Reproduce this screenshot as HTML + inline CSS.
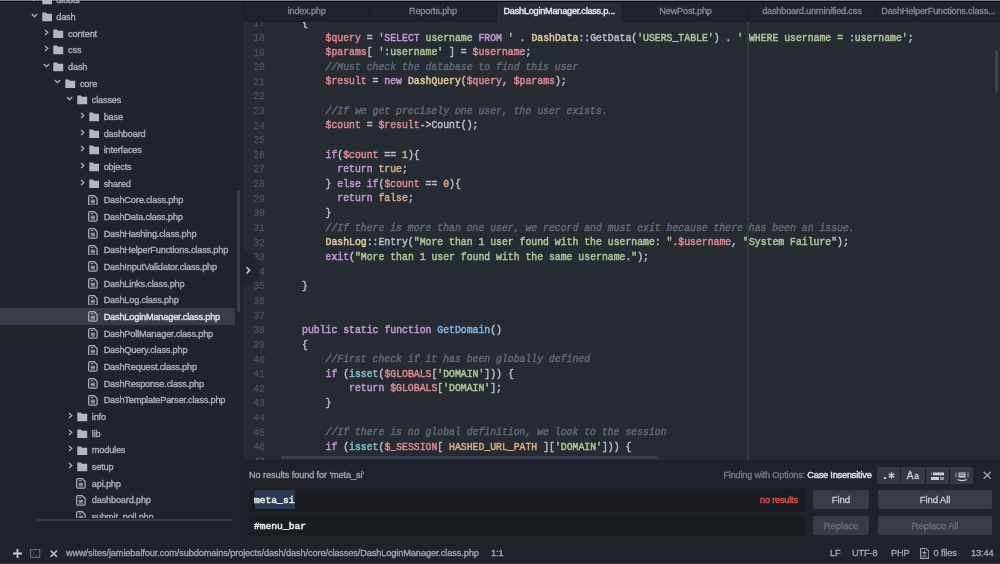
<!DOCTYPE html>
<html><head><meta charset="utf-8"><style>
*{margin:0;padding:0;box-sizing:border-box}
html,body{width:1000px;height:564px;overflow:hidden;background:#21252b;font-family:"Liberation Sans",sans-serif;}
.abs{position:absolute}
#topA{position:absolute;left:0;top:0;width:1000px;height:1px;background:#7a7d86}
#topB{position:absolute;left:0;top:1px;width:1000px;height:1px;background:#05060b}
#topC{position:absolute;left:0;top:2px;width:1000px;height:1px;background:#292c34}
#tree{position:absolute;left:0;top:0px;width:243px;height:542px;clip-path:inset(0);will-change:transform}
.row{position:absolute;left:0;width:235px;height:16.67px;font-size:9.2px;letter-spacing:-0.18px;color:#a8aeb9;white-space:nowrap}
.row.sel{background:#3b3e4a;color:#e0e3e8}
.row .t{position:absolute;top:0.6px;line-height:16.67px;-webkit-text-stroke:0.38px currentColor}
.chev{position:absolute}
#tabs{position:absolute;left:243px;top:2px;width:757px;height:19.5px;background:#21252b}
.tab{position:absolute;top:0;height:19.5px;width:126px;text-align:center;font-size:9.2px;letter-spacing:-0.2px;-webkit-text-stroke:0.3px currentColor;line-height:19px;border-left:1px solid #1d1f24;box-shadow:inset 0 -6px 0 #202227;color:#878d98;white-space:nowrap}
.tab.act{background:#282c34;color:#e2e5ea;box-shadow:none;-webkit-text-stroke:0.45px #e2e5ea;letter-spacing:-0.26px}
#editorbg{position:absolute;left:243px;top:21.5px;width:757px;height:438.5px;background:#282c34}
#editor{position:absolute;left:243px;top:21.5px;width:757px;height:438.5px;clip-path:inset(0);will-change:transform}
.ln{position:absolute;transform:scaleY(1.1);transform-origin:50% 62%;-webkit-text-stroke:0.25px currentColor;left:0;width:22px;text-align:right;font-family:"Liberation Mono",monospace;font-size:9.81px;color:#4b5263}
.cl{position:absolute;white-space:pre;transform:scaleY(1.1);transform-origin:50% 62%;-webkit-text-stroke:0.45px currentColor;font-family:"Liberation Mono",monospace;font-size:9.81px;color:#b9bfca}
.r{color:#dc8a92} .g{color:#aac898} .p{color:#c49ad6} .y{color:#e2cc9c} .o{color:#d6ae8a} .b{color:#80b6e6} .c{color:#80bec6} .cm{color:#636a76;font-style:italic}
#find{position:absolute;left:243px;top:460px;width:757px;height:82px;background:#21252b;will-change:transform}
#status{position:absolute;left:0;top:542px;width:1000px;height:20px;background:#21252b;font-size:9.2px;letter-spacing:-0.1px;-webkit-text-stroke:0.3px currentColor;color:#a3a9b4}
#botline{position:absolute;left:0;top:562px;width:1000px;height:1px;background:#1d1c23}
#botline2{position:absolute;left:0;top:563px;width:1000px;height:1px;background:#403f4a}
#botband{position:absolute;left:0;top:560.5px;width:1000px;height:1.5px;background:#262630}
.inp{position:absolute;background:#1c1e24;border-radius:2px}
.btn{position:absolute;background:#383d48;border-radius:2px;font-size:9.8px;color:#c5cad3;text-align:center}
</style></head><body><div id="root" style="position:absolute;left:0;top:0;width:1000px;height:564px;opacity:0.999">
<div id="topA"></div><div id="topB"></div><div id="topC"></div>
<div id="tree"><div class="row" style="top:-8.41px"><svg class="abs" style="left:32.15px;top:3.735000000000001px" width="5" height="7" viewBox="0 0 5 7"><path d="M1.1 0.9L3.7 3.5L1.1 6.1" fill="none" stroke="#a3aab6" stroke-width="1.45"/></svg><svg class="abs" style="left:41.55px;top:3.835000000000001px" width="10.5" height="9.6" viewBox="0 0 10.5 9.6"><path d="M0.3 0.4h3.6l1 1.3h5.3v7.6h-9.9z" fill="#b3b9c3"/></svg><span class="t" style="left:56.25px">dlobal</span></div><div class="row" style="top:8.27px"><svg class="abs" style="left:30.65px;top:4.4350000000000005px" width="7" height="5" viewBox="0 0 7 5"><path d="M0.9 1.1L3.5 3.7L6.1 1.1" fill="none" stroke="#a3aab6" stroke-width="1.45"/></svg><svg class="abs" style="left:41.55px;top:3.835000000000001px" width="10.5" height="9.6" viewBox="0 0 10.5 9.6"><path d="M0.3 0.4h3.6l1 1.3h5.3v7.6h-9.9z" fill="#b3b9c3"/></svg><span class="t" style="left:56.25px">dash</span></div><div class="row" style="top:24.94px"><svg class="abs" style="left:43.99999999999999px;top:3.735000000000001px" width="5" height="7" viewBox="0 0 5 7"><path d="M1.1 0.9L3.7 3.5L1.1 6.1" fill="none" stroke="#a3aab6" stroke-width="1.45"/></svg><svg class="abs" style="left:53.39999999999999px;top:3.835000000000001px" width="10.5" height="9.6" viewBox="0 0 10.5 9.6"><path d="M0.3 0.4h3.6l1 1.3h5.3v7.6h-9.9z" fill="#b3b9c3"/></svg><span class="t" style="left:68.1px">content</span></div><div class="row" style="top:41.61px"><svg class="abs" style="left:43.99999999999999px;top:3.735000000000001px" width="5" height="7" viewBox="0 0 5 7"><path d="M1.1 0.9L3.7 3.5L1.1 6.1" fill="none" stroke="#a3aab6" stroke-width="1.45"/></svg><svg class="abs" style="left:53.39999999999999px;top:3.835000000000001px" width="10.5" height="9.6" viewBox="0 0 10.5 9.6"><path d="M0.3 0.4h3.6l1 1.3h5.3v7.6h-9.9z" fill="#b3b9c3"/></svg><span class="t" style="left:68.1px">css</span></div><div class="row" style="top:58.28px"><svg class="abs" style="left:42.49999999999999px;top:4.4350000000000005px" width="7" height="5" viewBox="0 0 7 5"><path d="M0.9 1.1L3.5 3.7L6.1 1.1" fill="none" stroke="#a3aab6" stroke-width="1.45"/></svg><svg class="abs" style="left:53.39999999999999px;top:3.835000000000001px" width="10.5" height="9.6" viewBox="0 0 10.5 9.6"><path d="M0.3 0.4h3.6l1 1.3h5.3v7.6h-9.9z" fill="#b3b9c3"/></svg><span class="t" style="left:68.1px">dash</span></div><div class="row" style="top:74.95px"><svg class="abs" style="left:54.35px;top:4.4350000000000005px" width="7" height="5" viewBox="0 0 7 5"><path d="M0.9 1.1L3.5 3.7L6.1 1.1" fill="none" stroke="#a3aab6" stroke-width="1.45"/></svg><svg class="abs" style="left:65.25px;top:3.835000000000001px" width="10.5" height="9.6" viewBox="0 0 10.5 9.6"><path d="M0.3 0.4h3.6l1 1.3h5.3v7.6h-9.9z" fill="#b3b9c3"/></svg><span class="t" style="left:79.95px">core</span></div><div class="row" style="top:91.62px"><svg class="abs" style="left:66.19999999999999px;top:4.4350000000000005px" width="7" height="5" viewBox="0 0 7 5"><path d="M0.9 1.1L3.5 3.7L6.1 1.1" fill="none" stroke="#a3aab6" stroke-width="1.45"/></svg><svg class="abs" style="left:77.1px;top:3.835000000000001px" width="10.5" height="9.6" viewBox="0 0 10.5 9.6"><path d="M0.3 0.4h3.6l1 1.3h5.3v7.6h-9.9z" fill="#b3b9c3"/></svg><span class="t" style="left:91.8px">classes</span></div><div class="row" style="top:108.29px"><svg class="abs" style="left:79.55000000000001px;top:3.735000000000001px" width="5" height="7" viewBox="0 0 5 7"><path d="M1.1 0.9L3.7 3.5L1.1 6.1" fill="none" stroke="#a3aab6" stroke-width="1.45"/></svg><svg class="abs" style="left:88.95px;top:3.835000000000001px" width="10.5" height="9.6" viewBox="0 0 10.5 9.6"><path d="M0.3 0.4h3.6l1 1.3h5.3v7.6h-9.9z" fill="#b3b9c3"/></svg><span class="t" style="left:103.65px">base</span></div><div class="row" style="top:124.96px"><svg class="abs" style="left:79.55000000000001px;top:3.735000000000001px" width="5" height="7" viewBox="0 0 5 7"><path d="M1.1 0.9L3.7 3.5L1.1 6.1" fill="none" stroke="#a3aab6" stroke-width="1.45"/></svg><svg class="abs" style="left:88.95px;top:3.835000000000001px" width="10.5" height="9.6" viewBox="0 0 10.5 9.6"><path d="M0.3 0.4h3.6l1 1.3h5.3v7.6h-9.9z" fill="#b3b9c3"/></svg><span class="t" style="left:103.65px">dashboard</span></div><div class="row" style="top:141.63px"><svg class="abs" style="left:79.55000000000001px;top:3.735000000000001px" width="5" height="7" viewBox="0 0 5 7"><path d="M1.1 0.9L3.7 3.5L1.1 6.1" fill="none" stroke="#a3aab6" stroke-width="1.45"/></svg><svg class="abs" style="left:88.95px;top:3.835000000000001px" width="10.5" height="9.6" viewBox="0 0 10.5 9.6"><path d="M0.3 0.4h3.6l1 1.3h5.3v7.6h-9.9z" fill="#b3b9c3"/></svg><span class="t" style="left:103.65px">interfaces</span></div><div class="row" style="top:158.30px"><svg class="abs" style="left:79.55000000000001px;top:3.735000000000001px" width="5" height="7" viewBox="0 0 5 7"><path d="M1.1 0.9L3.7 3.5L1.1 6.1" fill="none" stroke="#a3aab6" stroke-width="1.45"/></svg><svg class="abs" style="left:88.95px;top:3.835000000000001px" width="10.5" height="9.6" viewBox="0 0 10.5 9.6"><path d="M0.3 0.4h3.6l1 1.3h5.3v7.6h-9.9z" fill="#b3b9c3"/></svg><span class="t" style="left:103.65px">objects</span></div><div class="row" style="top:174.97px"><svg class="abs" style="left:79.55000000000001px;top:3.735000000000001px" width="5" height="7" viewBox="0 0 5 7"><path d="M1.1 0.9L3.7 3.5L1.1 6.1" fill="none" stroke="#a3aab6" stroke-width="1.45"/></svg><svg class="abs" style="left:88.95px;top:3.835000000000001px" width="10.5" height="9.6" viewBox="0 0 10.5 9.6"><path d="M0.3 0.4h3.6l1 1.3h5.3v7.6h-9.9z" fill="#b3b9c3"/></svg><span class="t" style="left:103.65px">shared</span></div><div class="row" style="top:191.64px"><svg class="abs" style="left:88.25px;top:3.035000000000001px" width="9.8" height="10.8" viewBox="0 0 9.8 10.8"><path d="M1.9 0.7h4.4l2.8 2.8v5.4q0 1.2-1.2 1.2h-6q-1.2 0-1.2-1.2v-7q0-1.2 1.2-1.2z" fill="none" stroke="#aab0ba" stroke-width="1.25"/><path d="M2.8 2.6h2.6M2.8 5.2h4.2M2.8 6.6h4.2M2.8 8h4.2" stroke="#aab0ba" stroke-width="1"/></svg><span class="t" style="left:103.65px">DashCore.class.php</span></div><div class="row" style="top:208.31px"><svg class="abs" style="left:88.25px;top:3.035000000000001px" width="9.8" height="10.8" viewBox="0 0 9.8 10.8"><path d="M1.9 0.7h4.4l2.8 2.8v5.4q0 1.2-1.2 1.2h-6q-1.2 0-1.2-1.2v-7q0-1.2 1.2-1.2z" fill="none" stroke="#aab0ba" stroke-width="1.25"/><path d="M2.8 2.6h2.6M2.8 5.2h4.2M2.8 6.6h4.2M2.8 8h4.2" stroke="#aab0ba" stroke-width="1"/></svg><span class="t" style="left:103.65px">DashData.class.php</span></div><div class="row" style="top:224.98px"><svg class="abs" style="left:88.25px;top:3.035000000000001px" width="9.8" height="10.8" viewBox="0 0 9.8 10.8"><path d="M1.9 0.7h4.4l2.8 2.8v5.4q0 1.2-1.2 1.2h-6q-1.2 0-1.2-1.2v-7q0-1.2 1.2-1.2z" fill="none" stroke="#aab0ba" stroke-width="1.25"/><path d="M2.8 2.6h2.6M2.8 5.2h4.2M2.8 6.6h4.2M2.8 8h4.2" stroke="#aab0ba" stroke-width="1"/></svg><span class="t" style="left:103.65px">DashHashing.class.php</span></div><div class="row" style="top:241.65px"><svg class="abs" style="left:88.25px;top:3.035000000000001px" width="9.8" height="10.8" viewBox="0 0 9.8 10.8"><path d="M1.9 0.7h4.4l2.8 2.8v5.4q0 1.2-1.2 1.2h-6q-1.2 0-1.2-1.2v-7q0-1.2 1.2-1.2z" fill="none" stroke="#aab0ba" stroke-width="1.25"/><path d="M2.8 2.6h2.6M2.8 5.2h4.2M2.8 6.6h4.2M2.8 8h4.2" stroke="#aab0ba" stroke-width="1"/></svg><span class="t" style="left:103.65px">DashHelperFunctions.class.php</span></div><div class="row" style="top:258.32px"><svg class="abs" style="left:88.25px;top:3.035000000000001px" width="9.8" height="10.8" viewBox="0 0 9.8 10.8"><path d="M1.9 0.7h4.4l2.8 2.8v5.4q0 1.2-1.2 1.2h-6q-1.2 0-1.2-1.2v-7q0-1.2 1.2-1.2z" fill="none" stroke="#aab0ba" stroke-width="1.25"/><path d="M2.8 2.6h2.6M2.8 5.2h4.2M2.8 6.6h4.2M2.8 8h4.2" stroke="#aab0ba" stroke-width="1"/></svg><span class="t" style="left:103.65px">DashInputValidator.class.php</span></div><div class="row" style="top:274.99px"><svg class="abs" style="left:88.25px;top:3.035000000000001px" width="9.8" height="10.8" viewBox="0 0 9.8 10.8"><path d="M1.9 0.7h4.4l2.8 2.8v5.4q0 1.2-1.2 1.2h-6q-1.2 0-1.2-1.2v-7q0-1.2 1.2-1.2z" fill="none" stroke="#aab0ba" stroke-width="1.25"/><path d="M2.8 2.6h2.6M2.8 5.2h4.2M2.8 6.6h4.2M2.8 8h4.2" stroke="#aab0ba" stroke-width="1"/></svg><span class="t" style="left:103.65px">DashLinks.class.php</span></div><div class="row" style="top:291.66px"><svg class="abs" style="left:88.25px;top:3.035000000000001px" width="9.8" height="10.8" viewBox="0 0 9.8 10.8"><path d="M1.9 0.7h4.4l2.8 2.8v5.4q0 1.2-1.2 1.2h-6q-1.2 0-1.2-1.2v-7q0-1.2 1.2-1.2z" fill="none" stroke="#aab0ba" stroke-width="1.25"/><path d="M2.8 2.6h2.6M2.8 5.2h4.2M2.8 6.6h4.2M2.8 8h4.2" stroke="#aab0ba" stroke-width="1"/></svg><span class="t" style="left:103.65px">DashLog.class.php</span></div><div class="row sel" style="top:308.33px"><svg class="abs" style="left:88.25px;top:3.035000000000001px" width="9.8" height="10.8" viewBox="0 0 9.8 10.8"><path d="M1.9 0.7h4.4l2.8 2.8v5.4q0 1.2-1.2 1.2h-6q-1.2 0-1.2-1.2v-7q0-1.2 1.2-1.2z" fill="none" stroke="#aab0ba" stroke-width="1.25"/><path d="M2.8 2.6h2.6M2.8 5.2h4.2M2.8 6.6h4.2M2.8 8h4.2" stroke="#aab0ba" stroke-width="1"/></svg><span class="t" style="left:103.65px">DashLoginManager.class.php</span></div><div class="row" style="top:325.00px"><svg class="abs" style="left:88.25px;top:3.035000000000001px" width="9.8" height="10.8" viewBox="0 0 9.8 10.8"><path d="M1.9 0.7h4.4l2.8 2.8v5.4q0 1.2-1.2 1.2h-6q-1.2 0-1.2-1.2v-7q0-1.2 1.2-1.2z" fill="none" stroke="#aab0ba" stroke-width="1.25"/><path d="M2.8 2.6h2.6M2.8 5.2h4.2M2.8 6.6h4.2M2.8 8h4.2" stroke="#aab0ba" stroke-width="1"/></svg><span class="t" style="left:103.65px">DashPollManager.class.php</span></div><div class="row" style="top:341.67px"><svg class="abs" style="left:88.25px;top:3.035000000000001px" width="9.8" height="10.8" viewBox="0 0 9.8 10.8"><path d="M1.9 0.7h4.4l2.8 2.8v5.4q0 1.2-1.2 1.2h-6q-1.2 0-1.2-1.2v-7q0-1.2 1.2-1.2z" fill="none" stroke="#aab0ba" stroke-width="1.25"/><path d="M2.8 2.6h2.6M2.8 5.2h4.2M2.8 6.6h4.2M2.8 8h4.2" stroke="#aab0ba" stroke-width="1"/></svg><span class="t" style="left:103.65px">DashQuery.class.php</span></div><div class="row" style="top:358.34px"><svg class="abs" style="left:88.25px;top:3.035000000000001px" width="9.8" height="10.8" viewBox="0 0 9.8 10.8"><path d="M1.9 0.7h4.4l2.8 2.8v5.4q0 1.2-1.2 1.2h-6q-1.2 0-1.2-1.2v-7q0-1.2 1.2-1.2z" fill="none" stroke="#aab0ba" stroke-width="1.25"/><path d="M2.8 2.6h2.6M2.8 5.2h4.2M2.8 6.6h4.2M2.8 8h4.2" stroke="#aab0ba" stroke-width="1"/></svg><span class="t" style="left:103.65px">DashRequest.class.php</span></div><div class="row" style="top:375.01px"><svg class="abs" style="left:88.25px;top:3.035000000000001px" width="9.8" height="10.8" viewBox="0 0 9.8 10.8"><path d="M1.9 0.7h4.4l2.8 2.8v5.4q0 1.2-1.2 1.2h-6q-1.2 0-1.2-1.2v-7q0-1.2 1.2-1.2z" fill="none" stroke="#aab0ba" stroke-width="1.25"/><path d="M2.8 2.6h2.6M2.8 5.2h4.2M2.8 6.6h4.2M2.8 8h4.2" stroke="#aab0ba" stroke-width="1"/></svg><span class="t" style="left:103.65px">DashResponse.class.php</span></div><div class="row" style="top:391.68px"><svg class="abs" style="left:88.25px;top:3.035000000000001px" width="9.8" height="10.8" viewBox="0 0 9.8 10.8"><path d="M1.9 0.7h4.4l2.8 2.8v5.4q0 1.2-1.2 1.2h-6q-1.2 0-1.2-1.2v-7q0-1.2 1.2-1.2z" fill="none" stroke="#aab0ba" stroke-width="1.25"/><path d="M2.8 2.6h2.6M2.8 5.2h4.2M2.8 6.6h4.2M2.8 8h4.2" stroke="#aab0ba" stroke-width="1"/></svg><span class="t" style="left:103.65px">DashTemplateParser.class.php</span></div><div class="row" style="top:408.35px"><svg class="abs" style="left:67.69999999999999px;top:3.735000000000001px" width="5" height="7" viewBox="0 0 5 7"><path d="M1.1 0.9L3.7 3.5L1.1 6.1" fill="none" stroke="#a3aab6" stroke-width="1.45"/></svg><svg class="abs" style="left:77.1px;top:3.835000000000001px" width="10.5" height="9.6" viewBox="0 0 10.5 9.6"><path d="M0.3 0.4h3.6l1 1.3h5.3v7.6h-9.9z" fill="#b3b9c3"/></svg><span class="t" style="left:91.8px">info</span></div><div class="row" style="top:425.02px"><svg class="abs" style="left:67.69999999999999px;top:3.735000000000001px" width="5" height="7" viewBox="0 0 5 7"><path d="M1.1 0.9L3.7 3.5L1.1 6.1" fill="none" stroke="#a3aab6" stroke-width="1.45"/></svg><svg class="abs" style="left:77.1px;top:3.835000000000001px" width="10.5" height="9.6" viewBox="0 0 10.5 9.6"><path d="M0.3 0.4h3.6l1 1.3h5.3v7.6h-9.9z" fill="#b3b9c3"/></svg><span class="t" style="left:91.8px">lib</span></div><div class="row" style="top:441.69px"><svg class="abs" style="left:67.69999999999999px;top:3.735000000000001px" width="5" height="7" viewBox="0 0 5 7"><path d="M1.1 0.9L3.7 3.5L1.1 6.1" fill="none" stroke="#a3aab6" stroke-width="1.45"/></svg><svg class="abs" style="left:77.1px;top:3.835000000000001px" width="10.5" height="9.6" viewBox="0 0 10.5 9.6"><path d="M0.3 0.4h3.6l1 1.3h5.3v7.6h-9.9z" fill="#b3b9c3"/></svg><span class="t" style="left:91.8px">modules</span></div><div class="row" style="top:458.36px"><svg class="abs" style="left:67.69999999999999px;top:3.735000000000001px" width="5" height="7" viewBox="0 0 5 7"><path d="M1.1 0.9L3.7 3.5L1.1 6.1" fill="none" stroke="#a3aab6" stroke-width="1.45"/></svg><svg class="abs" style="left:77.1px;top:3.835000000000001px" width="10.5" height="9.6" viewBox="0 0 10.5 9.6"><path d="M0.3 0.4h3.6l1 1.3h5.3v7.6h-9.9z" fill="#b3b9c3"/></svg><span class="t" style="left:91.8px">setup</span></div><div class="row" style="top:475.03px"><svg class="abs" style="left:76.39999999999999px;top:3.035000000000001px" width="9.8" height="10.8" viewBox="0 0 9.8 10.8"><path d="M1.9 0.7h4.4l2.8 2.8v5.4q0 1.2-1.2 1.2h-6q-1.2 0-1.2-1.2v-7q0-1.2 1.2-1.2z" fill="none" stroke="#aab0ba" stroke-width="1.25"/><path d="M2.8 2.6h2.6M2.8 5.2h4.2M2.8 6.6h4.2M2.8 8h4.2" stroke="#aab0ba" stroke-width="1"/></svg><span class="t" style="left:91.8px">api.php</span></div><div class="row" style="top:491.70px"><svg class="abs" style="left:76.39999999999999px;top:3.035000000000001px" width="9.8" height="10.8" viewBox="0 0 9.8 10.8"><path d="M1.9 0.7h4.4l2.8 2.8v5.4q0 1.2-1.2 1.2h-6q-1.2 0-1.2-1.2v-7q0-1.2 1.2-1.2z" fill="none" stroke="#aab0ba" stroke-width="1.25"/><path d="M2.8 2.6h2.6M2.8 5.2h4.2M2.8 6.6h4.2M2.8 8h4.2" stroke="#aab0ba" stroke-width="1"/></svg><span class="t" style="left:91.8px">dashboard.php</span></div><div class="row" style="top:508.37px"><svg class="abs" style="left:76.39999999999999px;top:3.035000000000001px" width="9.8" height="10.8" viewBox="0 0 9.8 10.8"><path d="M1.9 0.7h4.4l2.8 2.8v5.4q0 1.2-1.2 1.2h-6q-1.2 0-1.2-1.2v-7q0-1.2 1.2-1.2z" fill="none" stroke="#aab0ba" stroke-width="1.25"/><path d="M2.8 2.6h2.6M2.8 5.2h4.2M2.8 6.6h4.2M2.8 8h4.2" stroke="#aab0ba" stroke-width="1"/></svg><span class="t" style="left:91.8px">submit_poll.php</span></div><div class="abs" style="left:237px;top:190px;width:2.5px;height:122px;background:#3a3f4a;border-radius:1px"></div><div class="abs" style="left:0;top:517.5px;width:243px;height:24.5px;background:#21252b"></div><div class="abs" style="left:37px;top:518.6px;width:195px;height:2.4px;background:#3a3f4a;border-radius:1px"></div></div>
<div id="tabs"><div class="tab" style="left:0.0px;width:126.3px">index.php</div><div class="tab" style="left:126.3px;width:126.3px">Reports.php</div><div class="tab act" style="left:252.6px;width:126.3px">DashLoginManager.class.p...</div><div class="tab" style="left:378.9px;width:126.3px">NewPost.php</div><div class="tab" style="left:505.2px;width:126.3px">dashboard.unminified.css</div><div class="tab" style="left:631.5px;width:126.3px">DashHelperFunctions.class...</div></div>
<div id="editorbg"></div><div id="editor"><div class="ln" style="top:-4.73px;line-height:14.62px;left:0px;width:22px">17</div><div class="cl" style="top:-5.03px;line-height:14.62px;left:35.5px">    {</div><div class="ln" style="top:9.89px;line-height:14.62px;left:0px;width:22px">18</div><div class="cl" style="top:9.59px;line-height:14.62px;left:35.5px">        <span class="r">$query</span> = <span class="g">&#x27;</span><span class="p">SELECT</span><span class="g"> username </span><span class="p">FROM</span><span class="g"> &#x27;</span> . <span class="y">DashData</span>::GetData(<span class="g">&#x27;USERS_TABLE&#x27;</span>) . <span class="g">&#x27; WHERE username = :username&#x27;</span>;</div><div class="ln" style="top:24.51px;line-height:14.62px;left:0px;width:22px">19</div><div class="cl" style="top:24.21px;line-height:14.62px;left:35.5px">        <span class="r">$params</span>[ <span class="g">&#x27;:username&#x27;</span> ] = <span class="r">$username</span>;</div><div class="ln" style="top:39.13px;line-height:14.62px;left:0px;width:22px">20</div><div class="cl" style="top:38.83px;line-height:14.62px;left:35.5px">        <span class="cm">//Must check the database to find this user</span></div><div class="ln" style="top:53.75px;line-height:14.62px;left:0px;width:22px">21</div><div class="cl" style="top:53.45px;line-height:14.62px;left:35.5px">        <span class="r">$result</span> = <span class="p">new</span> <span class="y">DashQuery</span>(<span class="r">$query</span>, <span class="r">$params</span>);</div><div class="ln" style="top:68.37px;line-height:14.62px;left:0px;width:22px">22</div><div class="ln" style="top:82.99px;line-height:14.62px;left:0px;width:22px">23</div><div class="cl" style="top:82.69px;line-height:14.62px;left:35.5px">        <span class="cm">//If we get precisely one user, the user exists.</span></div><div class="ln" style="top:97.61px;line-height:14.62px;left:0px;width:22px">24</div><div class="cl" style="top:97.31px;line-height:14.62px;left:35.5px">        <span class="r">$count</span> = <span class="r">$result</span>-&gt;Count();</div><div class="ln" style="top:112.23px;line-height:14.62px;left:0px;width:22px">25</div><div class="ln" style="top:126.85px;line-height:14.62px;left:0px;width:22px">26</div><div class="cl" style="top:126.55px;line-height:14.62px;left:35.5px">        <span class="p">if</span>(<span class="r">$count</span> == <span class="o">1</span>){</div><div class="ln" style="top:141.47px;line-height:14.62px;left:0px;width:22px">27</div><div class="cl" style="top:141.17px;line-height:14.62px;left:35.5px">          <span class="p">return</span> <span class="o">true</span>;</div><div class="ln" style="top:156.09px;line-height:14.62px;left:0px;width:22px">28</div><div class="cl" style="top:155.79px;line-height:14.62px;left:35.5px">        } <span class="p">else</span> <span class="p">if</span>(<span class="r">$count</span> == <span class="o">0</span>){</div><div class="ln" style="top:170.71px;line-height:14.62px;left:0px;width:22px">29</div><div class="cl" style="top:170.41px;line-height:14.62px;left:35.5px">          <span class="p">return</span> <span class="o">false</span>;</div><div class="ln" style="top:185.33px;line-height:14.62px;left:0px;width:22px">30</div><div class="cl" style="top:185.03px;line-height:14.62px;left:35.5px">        }</div><div class="ln" style="top:199.95px;line-height:14.62px;left:0px;width:22px">31</div><div class="cl" style="top:199.65px;line-height:14.62px;left:35.5px">        <span class="cm">//If there is more than one user, we record and must exit because there has been an issue.</span></div><div class="ln" style="top:214.57px;line-height:14.62px;left:0px;width:22px">32</div><div class="cl" style="top:214.27px;line-height:14.62px;left:35.5px">        <span class="y">DashLog</span>::Entry(<span class="g">&quot;More than 1 user found with the username: &quot;</span>.<span class="r">$username</span>, <span class="g">&quot;System Failure&quot;</span>);</div><div class="ln" style="top:229.19px;line-height:14.62px;left:0px;width:22px">33</div><div class="cl" style="top:228.89px;line-height:14.62px;left:35.5px">        <span class="p">exit</span>(<span class="g">&quot;More than 1 user found with the same username.&quot;</span>);</div><div class="ln" style="top:243.81px;line-height:14.62px;left:0px;width:22px">34</div><div class="ln" style="top:258.43px;line-height:14.62px;left:0px;width:22px">35</div><div class="cl" style="top:258.13px;line-height:14.62px;left:35.5px">    }</div><div class="ln" style="top:273.05px;line-height:14.62px;left:0px;width:22px">36</div><div class="ln" style="top:287.67px;line-height:14.62px;left:0px;width:22px">37</div><div class="ln" style="top:302.29px;line-height:14.62px;left:0px;width:22px">38</div><div class="cl" style="top:301.99px;line-height:14.62px;left:35.5px">    <span class="p">public</span> <span class="p">static</span> <span class="p">function</span> <span class="b">GetDomain</span>()</div><div class="ln" style="top:316.91px;line-height:14.62px;left:0px;width:22px">39</div><div class="cl" style="top:316.61px;line-height:14.62px;left:35.5px">    {</div><div class="ln" style="top:331.53px;line-height:14.62px;left:0px;width:22px">40</div><div class="cl" style="top:331.23px;line-height:14.62px;left:35.5px">        <span class="cm">//First check if it has been globally defined</span></div><div class="ln" style="top:346.15px;line-height:14.62px;left:0px;width:22px">41</div><div class="cl" style="top:345.85px;line-height:14.62px;left:35.5px">        <span class="p">if</span> (<span class="c">isset</span>(<span class="r">$GLOBALS</span>[<span class="g">&#x27;DOMAIN&#x27;</span>])) {</div><div class="ln" style="top:360.77px;line-height:14.62px;left:0px;width:22px">42</div><div class="cl" style="top:360.47px;line-height:14.62px;left:35.5px">            <span class="p">return</span> <span class="r">$GLOBALS</span>[<span class="g">&#x27;DOMAIN&#x27;</span>];</div><div class="ln" style="top:375.39px;line-height:14.62px;left:0px;width:22px">43</div><div class="cl" style="top:375.09px;line-height:14.62px;left:35.5px">        }</div><div class="ln" style="top:390.01px;line-height:14.62px;left:0px;width:22px">44</div><div class="ln" style="top:404.63px;line-height:14.62px;left:0px;width:22px">45</div><div class="cl" style="top:404.33px;line-height:14.62px;left:35.5px">        <span class="cm">//If there is no global definition, we look to the session</span></div><div class="ln" style="top:419.25px;line-height:14.62px;left:0px;width:22px">46</div><div class="cl" style="top:418.95px;line-height:14.62px;left:35.5px">        <span class="p">if</span> (<span class="c">isset</span>(<span class="r">$_SESSION</span>[ <span class="o">HASHED_URL_PATH</span> ][<span class="g">&#x27;DOMAIN&#x27;</span>])) {</div><div class="ln" style="top:433.87px;line-height:14.62px;left:0px;width:22px">47</div><div class="abs" style="left:504.29999999999995px;top:0;width:1.3px;height:440px;background:#353a43"></div><div class="abs" style="left:751.8px;top:28.0px;width:3px;height:43px;background:#3e424b;border-radius:1.5px"></div><div class="abs" style="left:38px;top:434.0px;width:376px;height:2.5px;background:#3e4451;border-radius:1px"></div></div>
<div id="find"><div class="abs" style="left:6px;top:9.5px;font-size:9.2px;letter-spacing:-0.2px;-webkit-text-stroke:0.3px currentColor;white-space:nowrap;letter-spacing:-0.11px;color:#a3a9b4;line-height:11px">No results found for 'meta_si'</div><div class="abs" style="left:480.4px;top:9.5px;font-size:9.2px;letter-spacing:-0.2px;-webkit-text-stroke:0.3px currentColor;white-space:nowrap;color:#777d88;line-height:11px">Finding with Options: <span style="color:#dde0e5;-webkit-text-stroke:0.45px #dde0e5">Case Insensitive</span></div><div class="abs" style="left:633.6px;top:6.899999999999977px;width:96.89999999999998px;height:16.9px;background:#353a44;border-radius:2px"></div><div class="abs" style="left:657px;top:6.899999999999977px;width:1.2px;height:16.9px;background:#21252b"></div><div class="abs" style="left:681.5px;top:6.899999999999977px;width:1.2px;height:16.9px;background:#21252b"></div><div class="abs" style="left:705.8px;top:6.899999999999977px;width:1.2px;height:16.9px;background:#21252b"></div><div class="abs" style="left:641px;top:17px;width:2px;height:2px;background:#c8ccd4"></div><svg class="abs" style="left:644.5px;top:11.5px" width="7" height="7" viewBox="0 0 7 7"><path d="M3.5 0.3V6.7M0.7 1.9L6.3 5.1M0.7 5.1L6.3 1.9" stroke="#c8ccd4" stroke-width="1.3"/></svg><div class="abs" style="left:663.8px;top:9.5px;font-size:10px;letter-spacing:0.7px;line-height:12px;color:#c8ccd4;-webkit-text-stroke:0.35px #c8ccd4">A<span style="font-size:8.5px">a</span></div><svg class="abs" style="left:688px;top:11.5px" width="13" height="9" viewBox="0 0 13 9"><rect x="0" y="0.5" width="1" height="2.5" fill="#c8ccd4" opacity="0.6"/><rect x="2" y="0.5" width="11" height="2.8" fill="#c8ccd4"/><rect x="0" y="5" width="8" height="3" fill="#c8ccd4"/><rect x="9" y="5" width="4" height="3" fill="#c8ccd4" opacity="0.6"/></svg><svg class="abs" style="left:712px;top:11.5px" width="14" height="10" viewBox="0 0 14 10"><rect x="0.5" y="0.5" width="1" height="5" fill="#c8ccd4" opacity="0.7"/><rect x="12.5" y="0.5" width="1" height="5" fill="#c8ccd4" opacity="0.7"/><rect x="3.5" y="0.5" width="7" height="5" fill="#c8ccd4"/><path d="M4.5 1.8h5M4.5 3.3h5" stroke="#353a44" stroke-width="0.7"/><path d="M2.5 7.5Q7 9.8 11.5 7.5" stroke="#c8ccd4" stroke-width="1.4" fill="none"/></svg><svg class="abs" style="left:739.8px;top:11px" width="8.5" height="8.5" viewBox="0 0 8.5 8.5"><path d="M0.7 0.7L7.8 7.8M7.8 0.7L0.7 7.8" stroke="#9da5b4" stroke-width="1.4"/></svg><div class="inp" style="left:6px;top:29px;width:556px;height:22.5px"></div><div class="inp" style="left:6px;top:55px;width:556px;height:21px"></div><div class="abs" style="left:11.7px;top:30.3px;width:40.3px;height:18.7px;background:#2c3a53"></div><div class="abs" style="left:11px;top:33.5px;font-family:'Liberation Mono',monospace;font-size:9.65px;color:#e6e8ec;-webkit-text-stroke:0.55px #e6e8ec;line-height:13px">meta_si</div><div class="abs" style="left:11px;top:60px;font-family:'Liberation Mono',monospace;font-size:9.65px;color:#e6e8ec;-webkit-text-stroke:0.55px #e6e8ec;line-height:13px">#menu_bar</div><div class="abs" style="left:517px;top:35px;font-size:9.2px;letter-spacing:-0.2px;-webkit-text-stroke:0.3px currentColor;white-space:nowrap;color:#e8594f;line-height:11px">no results</div><div class="btn" style="left:569.8px;top:30.19999999999999px;width:56.3px;height:18.8px;line-height:20.8px;color:#c5cad3;font-size:9.2px;letter-spacing:-0.2px;-webkit-text-stroke:0.3px currentColor;white-space:nowrap;font-size:9.8px;-webkit-text-stroke:0.3px currentColor">Find</div><div class="btn" style="left:634.8px;top:30.19999999999999px;width:114.2px;height:18.8px;line-height:20.8px;color:#c5cad3;font-size:9.2px;letter-spacing:-0.2px;-webkit-text-stroke:0.3px currentColor;white-space:nowrap;font-size:9.8px;-webkit-text-stroke:0.3px currentColor">Find All</div><div class="btn" style="left:569.8px;top:55.89999999999998px;width:56.3px;height:18.8px;line-height:20.8px;color:#6b717d;font-size:9.2px;letter-spacing:-0.2px;-webkit-text-stroke:0.3px currentColor;white-space:nowrap;font-size:9.8px;-webkit-text-stroke:0.3px currentColor">Replace</div><div class="btn" style="left:634.8px;top:55.89999999999998px;width:114.2px;height:18.8px;line-height:20.8px;color:#6b717d;font-size:9.2px;letter-spacing:-0.2px;-webkit-text-stroke:0.3px currentColor;white-space:nowrap;font-size:9.8px;-webkit-text-stroke:0.3px currentColor">Replace All</div></div>
<div id="status"><svg class="abs" style="left:12.8px;top:7px" width="9" height="9" viewBox="0 0 9 9"><path d="M4.5 0V9M0 4.5H9" stroke="#c8ccd4" stroke-width="1.8"/></svg><svg class="abs" style="left:30.2px;top:6.6px" width="10.5" height="9.2" viewBox="0 0 10.5 9.2"><rect x="0.6" y="0.6" width="9.1" height="7.9" fill="none" stroke="#666b74" stroke-width="1.1"/><path d="M2.6 2.6L4.6 4.6L2.6 6.6M5.3 6.8H7.8" stroke="#555a63" stroke-width="0.9" fill="none"/></svg><svg class="abs" style="left:50px;top:7.5px" width="7.5" height="7.5" viewBox="0 0 7.5 7.5"><path d="M0.6 0.6L6.9 6.9M6.9 0.6L0.6 6.9" stroke="#b8bcc4" stroke-width="1.6"/></svg><div class="abs" style="left:66px;top:0.5px;line-height:20px;white-space:nowrap">www/sites/jamiebalfour.com/subdomains/projects/dash/dash/core/classes/DashLoginManager.class.php</div><div class="abs" style="left:491px;top:0.5px;line-height:20px">1:1</div><div class="abs" style="left:830px;top:0.5px;line-height:20px;white-space:nowrap">LF</div><div class="abs" style="left:852px;top:0.5px;line-height:20px;white-space:nowrap">UTF-8</div><div class="abs" style="left:891px;top:0.5px;line-height:20px;white-space:nowrap">PHP</div><div class="abs" style="left:933.5px;top:0.5px;line-height:20px;white-space:nowrap">0 files</div><div class="abs" style="left:971px;top:0.5px;line-height:20px;white-space:nowrap">13:44</div><svg class="abs" style="left:919.5px;top:4.5px" width="9.5" height="12" viewBox="0 0 9.5 12"><path d="M0.7 1.5h5.5l2.6 2.6v7.2h-8.1z" fill="none" stroke="#9da5b4" stroke-width="1.2"/><path d="M4.5 3.6v4M2.5 5.6h4M2.5 9h4" stroke="#9da5b4" stroke-width="1.1"/></svg></div>
<div id="botband"></div><div id="botline"></div><div id="botline2"></div>
<div class="abs" style="left:241.8px;top:21.5px;width:1.6px;height:520.5px;background:#1d2025"></div><svg class="abs" style="left:242px;top:251px" width="20" height="37" viewBox="0 0 20 37"><path d="M0 0.5A18 18 0 0 1 0 36.5Z" fill="#262930"/><path d="M0 3A15.5 15.5 0 0 1 0 34Z" fill="#23262c"/><path d="M4.6 16.2L7.6 19.3L4.6 22.4" stroke="#d0d3da" stroke-width="1.5" fill="none"/></svg></div></body></html>
